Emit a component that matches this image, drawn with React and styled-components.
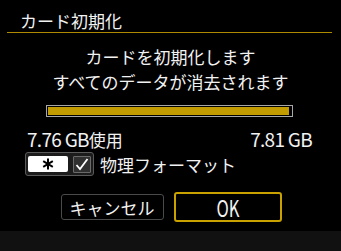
import React from "react";
import styled, { createGlobalStyle } from "styled-components";

const Global = createGlobalStyle`
  html, body { margin: 0; padding: 0; background: #000; }
  body { width: 341px; height: 251px; overflow: hidden; }
  #root { width: 341px; height: 251px; }
`;

const JP = `"Noto Sans CJK JP", sans-serif`;

const Screen = styled.div`
  width: 341px;
  height: 251px;
  display: flex;
  flex-direction: column;
  background: #000;
  color: #f2f2f2;
  font-family: ${JP};
  font-size: 17px;
`;

const Header = styled.div`
  height: 33px;
  box-sizing: border-box;
  padding: 8px 0 0 13px;
  line-height: 25px;
  border-bottom: 1px solid #ad8a00;
  margin: 0 9px 0 7px;
`;

const Message = styled.div`
  margin-top: 11px;
  text-align: center;
  line-height: 25px;
`;

const BarTrack = styled.div`
  margin: 11px 48px 0 46px;
  height: 12px;
  box-sizing: border-box;
  border: 1px solid #a8a8a8;
  padding: 1px 3px 1px 1px;
  background: #000;
`;

const BarFill = styled.div`
  height: 100%;
  background: #c29c00;
`;

const Capacity = styled.div`
  margin-top: 9px;
  display: flex;
  justify-content: space-between;
  padding: 0 29px 0 27px;
  line-height: 25px;
`;

const Latin = styled.span`
  font-size: 19px;
  letter-spacing: -0.7px;
`;

const Condensed = styled.span`
  display: inline-block;
  font-size: 23px;
  transform: scaleX(0.72);
  line-height: 1;
`;

const FormatRow = styled.div`
  display: flex;
  align-items: center;
  gap: 6px;
  padding-left: 25px;
  height: 24px;
`;

const KeyFrame = styled.div`
  display: flex;
  align-items: center;
  gap: 5px;
  box-sizing: border-box;
  width: 69px;
  height: 24px;
  padding: 0 2px 0 2px;
  border: 1px solid #5a5a5a;
  border-radius: 3px;
  background: #1c1c1c;
`;

const KeyCap = styled.div`
  width: 41px;
  height: 16px;
  border-radius: 2px;
  background: #fff;
  display: flex;
  align-items: center;
  justify-content: center;
`;

const CheckBox = styled.div`
  width: 19px;
  height: 17px;
  box-sizing: border-box;
  border: 1px solid #6a6a6a;
  border-radius: 1px;
  background: #303030;
  display: flex;
  align-items: center;
  justify-content: center;
`;

const Buttons = styled.div`
  margin-top: 16px;
  display: flex;
  justify-content: center;
  align-items: center;
  gap: 10px;
  padding-left: 1px;
`;

const Button = styled.div`
  box-sizing: border-box;
  width: ${(p) => (p.$primary ? 108 : 103)}px;
  height: ${(p) => (p.$primary ? 30 : 26)}px;
  border: ${(p) => (p.$primary ? "2px solid #c9a200" : "1px solid #4a4a4a")};
  border-radius: 3px;
  display: flex;
  align-items: center;
  justify-content: center;
  line-height: 1;
`;

const Footer = styled.div`
  margin-top: 9px;
  flex: 1;
  background: #111;
`;

const Asterisk = () => (
  <svg width="12" height="12" viewBox="0 0 12 12">
    <g stroke="#000" strokeWidth="2" strokeLinecap="butt">
      <line x1="6" y1="0.5" x2="6" y2="11.5" />
      <line x1="1.2" y1="3.2" x2="10.8" y2="8.8" />
      <line x1="1.2" y1="8.8" x2="10.8" y2="3.2" />
    </g>
  </svg>
);

const Check = () => (
  <svg width="14" height="13" viewBox="0 0 14 13">
    <polyline points="1.5,7 5,11 12.5,1" fill="none" stroke="#fff" strokeWidth="1.8" />
  </svg>
);

export default function App() {
  return (
    <>
      <Global />
      <Screen>
        <Header>カード初期化</Header>
        <Message>
          <div>カードを初期化します</div>
          <div>すべてのデータが消去されます</div>
        </Message>
        <BarTrack>
          <BarFill />
        </BarTrack>
        <Capacity>
          <span>
            <Latin>7.76 GB</Latin>使用
          </span>
          <Latin>7.81 GB</Latin>
        </Capacity>
        <FormatRow>
          <KeyFrame>
            <KeyCap>
              <Asterisk />
            </KeyCap>
            <CheckBox>
              <Check />
            </CheckBox>
          </KeyFrame>
          <span>物理フォーマット</span>
        </FormatRow>
        <Buttons>
          <Button>キャンセル</Button>
          <Button $primary>
            <Condensed>OK</Condensed>
          </Button>
        </Buttons>
        <Footer />
      </Screen>
    </>
  );
}
